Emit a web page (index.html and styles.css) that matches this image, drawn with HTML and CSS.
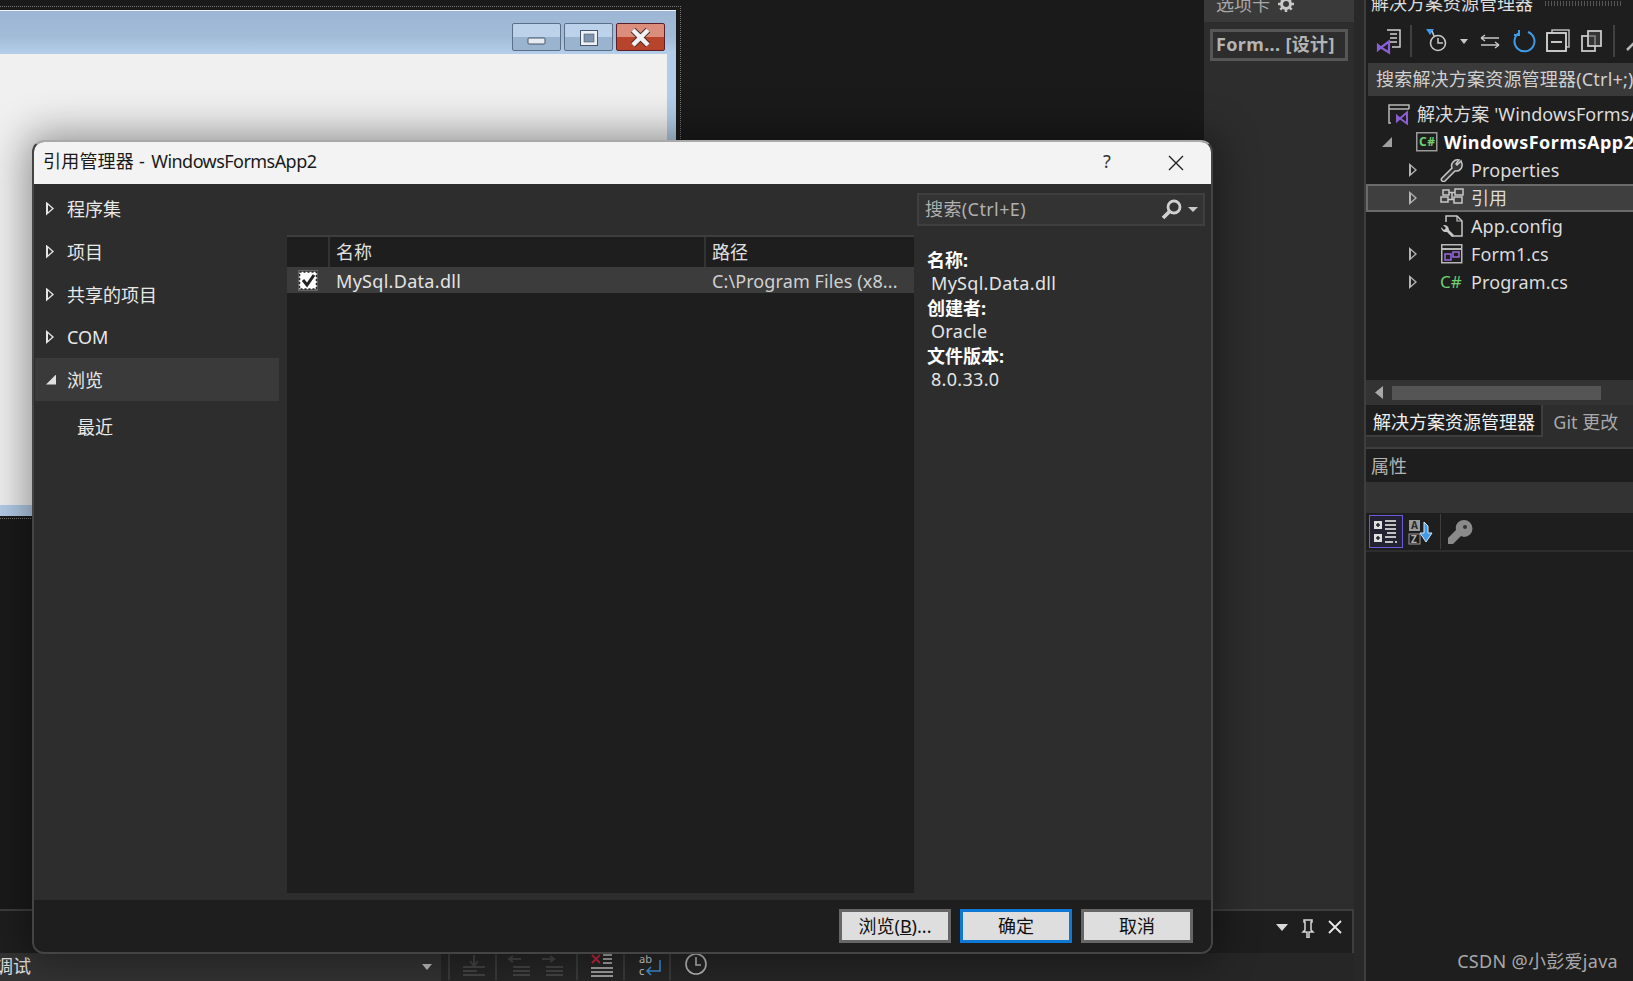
FILE: index.html
```html
<!DOCTYPE html>
<html lang="zh-CN">
<head>
<meta charset="utf-8">
<title>引用管理器 - WindowsFormsApp2</title>
<link rel="stylesheet" href="styles.css">
</head>
<body>
<div class="app">
  <div class="workspace">
    <div class="upper">
      <div class="editor">
        <div class="selection">
          <div class="form-window">
            <div class="form-title">
              <div class="caption-btn"><svg width="49" height="28" viewBox="0 0 49 28"><rect x="16" y="15" width="17" height="6" rx="1" fill="#e8ecf2" stroke="#46566a"/></svg></div>
              <div class="caption-btn"><svg width="49" height="28" viewBox="0 0 49 28"><rect x="16.500" y="7.500" width="17" height="15" fill="#eef2f6" stroke="#46566a"/><rect x="20" y="11" width="10" height="8" fill="#7f95b0" stroke="#46566a" stroke-width=".6"/></svg></div>
              <div class="caption-btn close"><svg width="49" height="28" viewBox="0 0 49 28"><path d="M17 7l7.500 7.500L32 7M17 22l7.500-7.500L32 22" fill="none" stroke="#4a3030" stroke-width="6.500"/><path d="M17 7l7.500 7.500L32 7M17 22l7.500-7.500L32 22" fill="none" stroke="#f2f2f2" stroke-width="4.500"/></svg></div>
            </div>
            <div class="form-client"></div>
          </div>
        </div>
      </div>
      <aside class="toolbox">
        <div class="toolbox-tab"><span class="clip-text">选项卡</span>
          <svg class="gear" width="16" height="16" viewBox="0 0 16 16"><circle cx="8" cy="8" r="4.500" fill="none" stroke="#c8c8c8" stroke-width="3"/><path d="M8 0v3M8 13v3M0 8h3M13 8h3M2.300 2.300l2 2M11.700 11.700l2 2M2.300 13.700l2-2M11.700 4.300l2-2" stroke="#c8c8c8" stroke-width="2.500"/></svg>
        </div>
        <div class="doc-tab">Form... [设计]</div>
      </aside>
    </div>
    <div class="output-panel">
      <svg class="panel-glyph" width="78" height="20" viewBox="0 0 78 20"><path d="M2 6h12l-6 7z" fill="#d8d8d8"/><path d="M30 2h8v2h-1v8l2 2h-4v6h-2v-6h-4l2-2V4h-1z" fill="none" stroke="#d8d8d8" stroke-width="1.500"/><path d="M55 3l12 12M67 3L55 15" stroke="#e8e8e8" stroke-width="1.800"/></svg>
    </div>
    <div class="bottom-bar">
      <div class="config-select"><span class="config-text">调试</span><span class="select-caret"></span></div>
      <svg class="bar-icons" width="300" height="28" viewBox="441 953 300 28">
        <g stroke="#505050" stroke-width="1" fill="none">
          <path d="M449 953v27M496 953v27M577 953v27M624 953v27M670 953v27"/>
        </g>
        <g stroke="#444" stroke-width="2" fill="none">
          <path d="M474 955v11M470 961l4 5 4-5M463 967h22M463 971h14M463 975h22"/>
          <path d="M509 959h12M513 956l-4 3 4 3M542 959h12M550 956l4 3-4 3M513 967h17M513 971h17M513 975h17M546 967h17M546 971h17M546 975h17"/>
        </g>
        <path d="M592 955l8 8M600 955l-8 8" stroke="#c0283c" stroke-width="1.800"/>
        <path d="M603 955h9M603 959h9M603 963h9M591 968h22M591 972h22M591 976h22" stroke="#c8c8c8" stroke-width="1.600"/>
        <text class="bar-abc" x="639" y="963">ab</text>
        <text class="bar-abc" x="639" y="975">c</text>
        <path d="M660 960v11h-13M651 967l-4 4 4 4" fill="none" stroke="#3f8fd8" stroke-width="1.600"/>
        <circle cx="696" cy="964" r="10" fill="none" stroke="#b8b8b8" stroke-width="1.600"/>
        <path d="M696 957v8h5" fill="none" stroke="#b8b8b8" stroke-width="1.600"/>
      </svg>
    </div>
  </div>

  <div class="gutter"></div>

  <aside class="right-col">
    <div class="panel-title"><span class="clip-text">解决方案资源管理器</span><span class="grip"></span></div>
    <svg class="se-tools" width="268" height="38" viewBox="1365 25 268 38">
      <path d="M1386 30h13v17h-8" fill="none" stroke="#d0d0d0" stroke-width="1.500"/>
      <path d="M1389 34h7M1389 38h7M1389 42h7" stroke="#d0d0d0" stroke-width="1.500"/>
      <path d="M1377 45l3 2.500 8-6v11l-8-5-3 2.500zM1388 41v12" fill="none" stroke="#8a5fd0" stroke-width="2.200"/>
      <path d="M1410 25v32M1613 25v32" stroke="#404040" stroke-width="2"/>
      <path d="M1425 29h8l-4 6z" fill="#3f9be8"/>
      <circle cx="1437" cy="43" r="7.500" fill="none" stroke="#c8c8c8" stroke-width="1.600"/>
      <path d="M1437 38v5h5M1431 31l2 5" fill="none" stroke="#c8c8c8" stroke-width="1.500"/>
      <path d="M1459 39h8l-4 5z" fill="#c8c8c8"/>
      <path d="M1480 38h18M1480 38l4-3M1480 38l4 3M1498 45h-18M1498 45l-4-3M1498 45l-4 3" fill="none" stroke="#c8c8c8" stroke-width="1.400"/>
      <path d="M1518 33a10 10 0 1 0 9-1M1518 30v5h-5" fill="none" stroke="#3f9be8" stroke-width="2"/>
      <path d="M1551 33v-3h17v17h-3" fill="none" stroke="#b8b8b8" stroke-width="1.500"/>
      <rect x="1546" y="33" width="19" height="18" fill="none" stroke="#d8d8d8" stroke-width="1.800"/>
      <path d="M1550 42h11" stroke="#d8d8d8" stroke-width="1.800"/>
      <rect x="1581" y="36" width="13" height="15" fill="none" stroke="#c8c8c8" stroke-width="1.800"/>
      <rect x="1587" y="31" width="13" height="15" fill="#444" fill-opacity=".6" stroke="#c8c8c8" stroke-width="1.800"/>
      <path d="M1626 50l7-7" stroke="#b8b8b8" stroke-width="2.500"/>
    </svg>
    <div class="se-search">搜索解决方案资源管理器(Ctrl+;)</div>
    <ul class="tree">
      <li class="row"><span class="ico lv1"><svg width="24" height="22" viewBox="0 0 24 22"><path d="M3 20H1V2h20v4M1 6h20" fill="none" stroke="#b8b8b8" stroke-width="1.500"/><path d="M9 13l3 2.500 7-6v11l-7-5-3 2.500zM19 9v11" fill="none" stroke="#8a5fd0" stroke-width="2"/></svg></span><span class="label">解决方案 'WindowsFormsApp2'</span></li>
      <li class="row strong"><span class="exp"></span><span class="ico lv1b"><svg width="22" height="20" viewBox="0 0 22 20"><rect x=".75" y=".75" width="20" height="18" fill="none" stroke="#9a9a9a" stroke-width="1.500"/><text class="cs-small" x="3" y="14">C#</text></svg></span><span class="label">WindowsFormsApp2</span></li>
      <li class="row child"><span class="tri"></span><span class="ico"><svg width="24" height="24" viewBox="0 0 24 24"><path d="M21 3l-4 4-1-1 3-4a6 6 0 0 0-7 8L2 20a2 2 0 0 0 3 3l10-10a6 6 0 0 0 7-7z" fill="#333" stroke="#c8c8c8" stroke-width="1.500"/></svg></span><span class="label">Properties</span></li>
      <li class="row child selected"><span class="tri"></span><span class="ico"><svg width="24" height="22" viewBox="0 0 24 22"><g fill="none" stroke="#c8c8c8" stroke-width="1.500"><rect x="3" y="3" width="6" height="5"/><rect x="15" y="2" width="8" height="6"/><rect x="1" y="10" width="7" height="5"/><rect x="14" y="10" width="8" height="6"/><path d="M9 5.500h6M8 12.500h6M12 5.500v7"/></g></svg></span><span class="label">引用</span></li>
      <li class="row child"><span class="tri none"></span><span class="ico"><svg width="24" height="24" viewBox="0 0 24 24"><path d="M6 8V2h11l5 5v15H12" fill="none" stroke="#c8c8c8" stroke-width="1.500"/><path d="M17 2v5h5" fill="none" stroke="#c8c8c8" stroke-width="1.200"/><path d="M1 13l3 3 2-2-3-3a5 5 0 0 1 6 5l5 5-2 2-5-5a5 5 0 0 1-6-5z" fill="#c8c8c8"/></svg></span><span class="label">App.config</span></li>
      <li class="row child"><span class="tri"></span><span class="ico"><svg width="24" height="22" viewBox="0 0 24 22"><rect x="1.750" y="1.750" width="20" height="18" fill="none" stroke="#b8b8b8" stroke-width="1.500"/><path d="M2 6h20" stroke="#b8b8b8" stroke-width="2"/><rect x="5" y="11" width="6" height="6" fill="none" stroke="#9a6ae0" stroke-width="1.500"/><rect x="13" y="9" width="6" height="5" fill="none" stroke="#9a6ae0" stroke-width="1.500"/></svg></span><span class="label">Form1.cs</span></li>
      <li class="row child"><span class="tri"></span><span class="ico"><span class="cs-big">C#</span></span><span class="label">Program.cs</span></li>
    </ul>
    <div class="tree-fill"></div>
    <div class="hscroll"><span class="hs-arrow"></span><span class="hs-thumb"></span></div>
    <div class="tabs"><div class="tab active">解决方案资源管理器</div><div class="tab">Git 更改</div></div>
    <div class="props">
      <div class="props-title">属性</div>
      <div class="props-band"></div>
      <div class="props-tools">
        <div class="prop-btn on"><svg width="24" height="26" viewBox="0 0 24 26"><g fill="#e0e0e0"><rect x="0" y="2" width="8" height="8"/><rect x="0" y="15" width="8" height="8"/></g><path d="M2 6h4M4 4v4M2 19h4M4 17v4" stroke="#222" stroke-width="1.500"/><path d="M11 2h11M11 6h11M11 10h11M13 14h9M11 18h11M11 23h8M21 23h2" stroke="#c0c0c0" stroke-width="1.800"/></svg></div>
        <div class="prop-btn"><svg width="26" height="28" viewBox="0 0 26 28"><rect x="1" y="2" width="11" height="11" fill="#9a9a9a"/><text class="az" x="3" y="11">A</text><rect x="1" y="16" width="11" height="10" fill="none" stroke="#9a9a9a"/><text class="az light" x="3" y="25">Z</text><path d="M16 4v11h-4l6 9 6-9h-4V8z" fill="#3f9be8" stroke="#d8e8f6"/></svg></div>
        <span class="prop-sep"></span>
        <div class="prop-btn wide"><svg width="26" height="26" viewBox="0 0 26 26"><path d="M17 1a8 8 0 0 0-8 10L1 19v6h5l8-8 3 1a8 8 0 1 0 0-17z" fill="#8a8a8a"/><circle cx="18" cy="8" r="2" fill="#333"/></svg></div>
      </div>
      <div class="props-body"><span class="watermark">CSDN @小彭爱java</span></div>
    </div>
  </aside>

  <div class="dialog">
    <div class="dlg-title">
      <span class="dlg-name">引用管理器 <span class="dlg-app">- WindowsFormsApp2</span></span>
      <span class="dlg-help">?</span>
      <svg class="dlg-x" width="16" height="16" viewBox="0 0 16 16"><path d="M1 1l14 14M15 1L1 15" stroke="#222" stroke-width="1.400"/></svg>
    </div>
    <div class="dlg-body">
      <nav class="nav">
        <div class="nav-item"><span class="tri bright"></span>程序集</div>
        <div class="nav-item"><span class="tri bright"></span>项目</div>
        <div class="nav-item"><span class="tri bright"></span>共享的项目</div>
        <div class="nav-item com"><span class="tri bright"></span>COM</div>
        <div class="nav-item current"><span class="exp bright"></span>浏览</div>
        <div class="nav-item sub">最近</div>
      </nav>
      <div class="list">
        <div class="list-head"><div class="c-check"></div><div class="c-name">名称</div><div class="c-path">路径</div></div>
        <div class="list-row">
          <div class="c-check"><svg width="20" height="21" viewBox="0 0 20 21"><rect width="20" height="21" fill="#666"/><rect x="1.500" y="2" width="17" height="17" fill="#fff" stroke="#222" stroke-width="1.500" stroke-dasharray="2 2"/><path d="M5 10l4 5 7-10" fill="none" stroke="#222" stroke-width="3"/></svg></div>
          <div class="c-name">MySql.Data.dll</div>
          <div class="c-path">C:\Program Files (x8...</div>
        </div>
      </div>
      <div class="detail">
        <div class="dlg-search">
          <span class="dlg-search-text">搜索(Ctrl+E)</span>
          <svg width="22" height="22" viewBox="0 0 22 22"><circle cx="13" cy="8" r="6" fill="none" stroke="#d0d0d0" stroke-width="2.800"/><path d="M8.500 12.500L2 19" stroke="#d0d0d0" stroke-width="3.800"/></svg>
          <span class="search-caret"></span>
        </div>
        <dl class="info">
          <dt>名称:</dt><dd>MySql.Data.dll</dd>
          <dt>创建者:</dt><dd>Oracle</dd>
          <dt>文件版本:</dt><dd>8.0.33.0</dd>
        </dl>
      </div>
    </div>
    <div class="dlg-foot">
      <button class="btn" type="button">浏览(<u>B</u>)...</button>
      <button class="btn primary" type="button">确定</button>
      <button class="btn" type="button">取消</button>
    </div>
  </div>
</div>
</body>
</html>
```
FILE: styles.css
```css
* { box-sizing: border-box; }
html, body { margin: 0; padding: 0; height: 100%; overflow: hidden; background: #1a1a1a; }
body { font-family: "Noto Sans", "Noto Sans CJK SC", sans-serif; font-size: 18px; color: #dcdcdc; }
svg { display: block; flex: none; }

.app { position: relative; display: flex; width: 1633px; height: 981px; overflow: hidden; }

.workspace { width: 1354px; display: flex; flex-direction: column; }
.upper { height: 909px; display: flex; }
.editor { width: 1204px; background: #1a1a1a; padding-top: 6px; }
.selection { width: 681px; height: 513px; padding: 3px 4px 3px 0; border: 1px dotted #777; border-left: 0; }
.form-window { height: 506px; background: #b3cde8; padding-right: 9px; padding-bottom: 10px; border-top: 1px solid #eef4fa; }
.form-title { height: 43px; margin-right: -9px; padding: 12px 11px 0 0; display: flex; justify-content: flex-end; gap: 3px; background: linear-gradient(#9cb6d4, #a2bcd8 60%, #b5cfea); }
.form-client { height: 451px; background: #f0f0f0; }
.caption-btn { width: 49px; height: 28px; border: 1px solid #5b6f88; border-radius: 2px; background: linear-gradient(#bcd2ea 50%, #9ab3cf 50%); overflow: hidden; }
.caption-btn svg { margin: -1px; }
.caption-btn.close { border-color: #5a1f2a; background: linear-gradient(#dc8d7c 50%, #b8442c 50%); }

.toolbox { width: 150px; background: #2d2d2d; padding: 0 6px; }
.toolbox-tab { height: 22px; margin: 0 -6px; padding-left: 12px; background: #3a3a3a; display: flex; align-items: center; gap: 8px; color: #a8a8a8; overflow: hidden; }
.clip-text { display: block; line-height: 26px; margin-top: -15px; white-space: nowrap; }
.gear { margin-top: -14px; }
.doc-tab { margin-top: 7px; height: 32px; border: 3px solid #565656; padding-left: 3px; font-weight: 700; letter-spacing: .35px; line-height: 24px; color: #b4b4b4; white-space: nowrap; }

.output-panel { height: 44px; background: #1e1e1e; border-top: 2px solid #3e3e3e; border-right: 2px solid #3e3e3e; display: flex; justify-content: flex-end; padding: 7px 0 0 0; }
.bottom-bar { height: 28px; background: #262626; display: flex; }
.config-select { width: 441px; background: #333; display: flex; align-items: center; justify-content: space-between; padding-right: 9px; overflow: hidden; }
.config-text { margin: -2px 0 0 -5px; color: #e0e0e0; line-height: 26px; }
.select-caret { width: 0; height: 0; border: 5px solid transparent; border-top: 6px solid #bbb; border-bottom: 0; }
.bar-abc { font-size: 11px; fill: #d0d0d0; }

.gutter { width: 10px; background: #282828; }

.right-col { width: 269px; border-left: 2px solid #3e3e3e; background: #1e1e1e; display: flex; flex-direction: column; }
.panel-title { height: 25px; display: flex; padding-left: 5px; overflow: hidden; color: #dcdcdc; }
.panel-title .clip-text { margin-top: -10px; }
.grip { width: 78px; height: 5px; margin: 1px 0 0 12px; background: repeating-linear-gradient(90deg, #555 0 1px, transparent 1px 3px); }
.se-tools { height: 38px; }
.se-search { height: 33px; margin-left: 2px; padding-left: 8px; background: #3a3a3a; color: #d0d0d0; letter-spacing: .2px; line-height: 32px; white-space: nowrap; overflow: hidden; }
.tree { list-style: none; margin: 0; padding: 4px 0 0; height: 203px; }
.row { height: 28px; position: relative; display: flex; align-items: center; white-space: nowrap; overflow: hidden; color: #dcdcdc; line-height: 26px; letter-spacing: .1px; }
.row .ico { width: 24px; height: 24px; display: flex; align-items: center; }
.lv1 { margin-left: 22px; margin-right: 5px; }
.lv1b { margin-left: 0; margin-right: 6px; }
.strong { padding-left: 16px; color: #fff; font-weight: 700; letter-spacing: .5px; }
.strong .exp { margin-right: 24px; }
.child { padding-left: 43px; }
.child .ico { margin-left: 23px; margin-right: 7px; }
.selected { background: #3f3f3f; border: 2px solid #6a6a6a; border-right: 0; padding-left: 41px; }
.tri { display: block; flex: none; width: 8px; height: 14px; position: relative; }
.tri::before { content: ""; position: absolute; inset: 0; background: #b4b4b4; clip-path: polygon(0 0, 100% 50%, 0 100%); }
.tri::after { content: ""; position: absolute; left: 1.500px; top: 3px; width: 4.500px; height: 8px; background: #1e1e1e; clip-path: polygon(0 0, 100% 50%, 0 100%); }
.selected .tri::after { background: #3f3f3f; }
.tri.none::before, .tri.none::after { display: none; }
.tri.bright { margin-right: 13px; }
.tri.bright::before { background: #e6e6e6; }
.tri.bright::after { background: #2d2d2d; }
.exp { display: block; flex: none; width: 10px; height: 10px; background: #a0a0a0; clip-path: polygon(100% 0, 100% 100%, 0 100%); }
.exp.bright { background: #e0e0e0; margin-right: 11px; }
.cs-small { font-size: 12px; font-weight: 700; fill: #6fcf6f; }
.cs-big { color: #6fcf6f; font-size: 17px; letter-spacing: 0; }
.tree-fill { height: 81px; }
.hscroll { height: 25px; background: #333; display: flex; align-items: center; padding-left: 9px; }
.hs-arrow { width: 8px; height: 13px; background: #a8a8a8; clip-path: polygon(100% 0, 100% 100%, 0 50%); }
.hs-thumb { width: 209px; height: 14px; margin-left: 9px; background: #555; }
.tabs { height: 32px; background: #2d2d2d; display: flex; }
.tab { padding: 0 0 0 10px; width: 90px; color: #a8a8a8; line-height: 34px; white-space: nowrap; }
.tab.active { width: 178px; padding: 0 0 0 7px; background: #1e1e1e; color: #f0f0f0; border-bottom: 2px solid #3e3e3e; border-right: 2px solid #3e3e3e; }
.props { flex: 1; padding-top: 10px; background: #2d2d2d; display: flex; flex-direction: column; }
.props-title { height: 35px; padding-left: 5px; background: #1e1e1e; border-top: 2px solid #3e3e3e; color: #b4b4b4; line-height: 34px; }
.props-band { height: 31px; background: #333; }
.props-tools { height: 39px; background: #1e1e1e; border-bottom: 2px solid #2d2d2d; display: flex; align-items: center; padding-left: 3px; gap: 1px; }
.prop-btn { width: 34px; height: 33px; display: flex; align-items: center; justify-content: center; }
.prop-btn.on { border: 1px solid #6a5cd8; background: #222232; }
.prop-btn.wide { width: 36px; }
.prop-sep { width: 1px; height: 35px; background: #3e3e3e; margin: 0 0 0 1px; }
.az { font-size: 10px; font-weight: 700; fill: #2a2a2a; }
.az.light { fill: #b0b0b0; }
.props-body { flex: 1; background: #1e1e1e; position: relative; }
.watermark { position: absolute; right: 15px; bottom: 8px; color: #a8a8a8; letter-spacing: .3px; line-height: 24px; white-space: nowrap; }

.dialog { position: absolute; left: 32px; top: 140px; width: 1181px; height: 814px; display: flex; flex-direction: column; border: 2px solid #444; border-top-color: #a9a9a9; border-radius: 12px; overflow: hidden; background: #2d2d2d; box-shadow: 0 0 40px 6px rgba(0, 0, 0, .4); }
.dlg-title { height: 42px; flex: none; background: #f3f3f3; display: flex; align-items: center; color: #1a1a1a; padding-left: 9px; }
.dlg-name { flex: 1; line-height: 26px; margin-top: -4px; letter-spacing: .2px; }
.dlg-app { letter-spacing: -.55px; word-spacing: 3px; }
.dlg-help { width: 65px; color: #333; margin-top: -4px; }
.dlg-x { margin-right: 27px; }
.dlg-body { height: 716px; flex: none; display: flex; background: #2d2d2d; }
.nav { width: 253px; padding: 3px 8px 0 1px; }
.nav-item { height: 43px; display: flex; align-items: center; padding-left: 11px; color: #e8e8e8; line-height: 26px; }
.nav-item.com { height: 42px; }
.nav-item.current { background: #3a3a3a; }
.nav-item.sub { margin-top: 4px; padding-left: 42px; }
.list { width: 627px; margin: 51px 0 7px; background: #1e1e1e; border-top: 2px solid #3e3e3e; }
.list-head { height: 30px; display: flex; line-height: 31px; color: #e0e0e0; }
.list-head > div + div { border-left: 2px solid #333; }
.list-row { height: 26px; display: flex; background: #3c3c3c; line-height: 28px; color: #e4e4e4; letter-spacing: .3px; white-space: nowrap; }
.c-check { width: 41px; padding: 3px 0 0 11px; }
.c-name { width: 376px; padding-left: 6px; }
.list-row .c-name { padding-left: 8px; }
.c-path { flex: 1; padding-left: 6px; overflow: hidden; }
.list-row .c-path { padding-left: 8px; color: #d0d0d0; letter-spacing: .1px; }
.detail { flex: 1; padding: 9px 6px 0 3px; }
.dlg-search { height: 33px; display: flex; align-items: center; background: #333; border: 2px solid #3f3f3f; padding: 0 5px 0 6px; color: #b0b0b0; letter-spacing: .4px; line-height: 26px; }
.dlg-search-text { flex: 1; margin-top: -2px; }
.search-caret { width: 0; height: 0; margin-left: 5px; border: 5px solid transparent; border-top: 5px solid #c8c8c8; border-bottom: 0; }
.info { margin: 22px 0 0 10px; line-height: 24px; }
.info dt { font-weight: 700; color: #fff; }
.info dd { margin: -1px 0 1px 4px; color: #e4e4e4; letter-spacing: .3px; }
.dlg-foot { flex: 1; background: #1e1e1e; display: flex; justify-content: flex-end; gap: 9px; padding: 9px 18px 0 0; }
.btn { width: 112px; height: 34px; background: #dedede; border: 3px solid #666; padding: 0; font: inherit; color: #111; line-height: 26px; }
.btn.primary { border-color: #0f78d4; }
```
